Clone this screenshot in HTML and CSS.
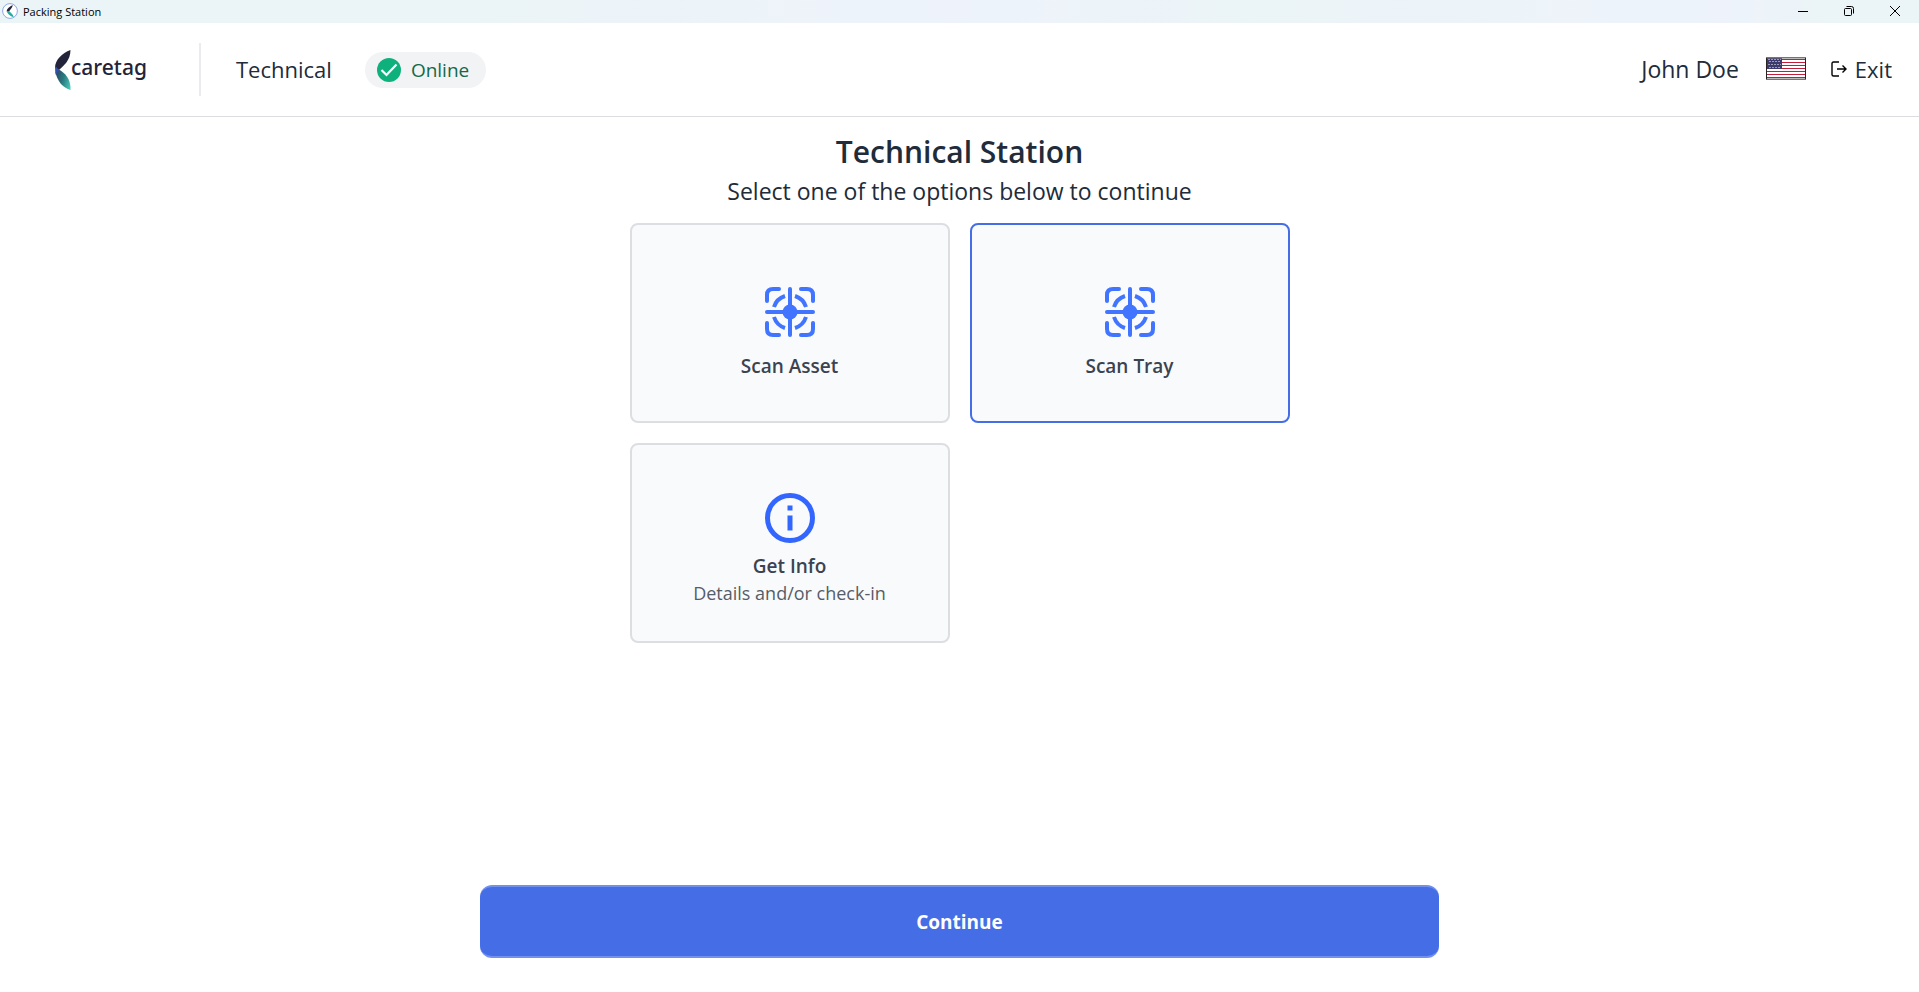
FILE: index.html
```html
<!DOCTYPE html>
<html lang="en">
<head>
<meta charset="UTF-8">
<meta name="viewport" content="width=device-width, initial-scale=1.0">
<title>Packing Station</title>
<link rel="stylesheet" href="styles.css">
</head>
<body>

<div class="titlebar">
  <svg class="app-icon" viewBox="0 0 16 16" aria-hidden="true">
    <circle cx="8" cy="8" r="7.4" fill="#fff" stroke="#8fa6e8"/>
    <path d="M10.8 2C7.5 3.5 5 5.5 4.600 8.2L7 8.8C7.8 6.8 10.5 5 10.8 2Z" fill="#23233a"/>
    <path d="M4.600 8C5.4 11 8 13 11.6 14.2C11.6 11.5 9 10.2 7 8Z" fill="#1fae9f"/>
  </svg>
  <span class="titlebar-text">Packing Station</span>
  <div class="window-controls">
    <button type="button" aria-label="Minimize">
      <svg viewBox="0 0 12 12"><path d="M1 6.5H11"/></svg>
    </button>
    <button type="button" aria-label="Restore">
      <svg viewBox="0 0 12 12"><rect x="1.5" y="3.5" width="7" height="7" rx="1"/><path d="M3.5 1.5H8.5A2 2 0 0 1 10.5 3.5V8.5"/></svg>
    </button>
    <button type="button" aria-label="Close">
      <svg viewBox="0 0 12 12"><path d="M1 1L11 11M11 1L1 11"/></svg>
    </button>
  </div>
</div>

<header class="header">
  <div class="logo">
    <svg class="logo-mark" viewBox="0 0 16 40" aria-hidden="true">
      <defs>
        <linearGradient id="leaf" x1="0" y1="0.3" x2="1" y2="0.7">
          <stop offset="0" stop-color="#2a4a66"/>
          <stop offset="0.5" stop-color="#2b7a80"/>
          <stop offset="1" stop-color="#45c4b4"/>
        </linearGradient>
      </defs>
      <path d="M15.5 0C7 3 0 10 0 18L4 20C8 16 15.500 11 15.500 0Z" fill="#23233a"/>
      <path d="M0.500 22C2 31 8 38 15.500 40C16 29 10 23 4 19.500Z" fill="url(#leaf)"/>
      <path d="M0.300 16C0 19 0 22 0.800 25L4 19.800Z" fill="#3350b0"/>
    </svg>
    <span class="logo-text">caretag</span>
  </div>
  <div class="station">Technical</div>
  <div class="status">
    <svg class="status-icon" viewBox="0 0 24 24" aria-hidden="true">
      <circle cx="12" cy="12" r="12" fill="#0eb17c"/>
      <path d="M4.500 12L9.500 17L19.500 6.500" fill="none" stroke="#fff" stroke-width="2.200"/>
    </svg>
    <span>Online</span>
  </div>
  <div class="user">
    <span>John Doe</span>
    <button type="button" class="flag" aria-label="Language: English (US)">
      <svg viewBox="0 0 40 23">
        <rect width="40" height="23" fill="#fff"/>
        <path d="M0 2.500H40M0 5.500H40M0 8.500H40M0 11.500H40M0 14.500H40M0 17.500H40M0 20.500H40" stroke="#bf1f3a" stroke-width="1.200"/>
        <rect x="1" y="1" width="15" height="11" fill="#3c3b6e"/>
        <path d="M2.500 2.500H15M3.500 4.500H15M2.500 7.500H15M3.500 10.500H15" stroke="#fff" stroke-dasharray="1 2"/>
        <path d="M0 0.700H40M0 22.300H40" stroke="#7d7276" stroke-width="1.400"/>
        <path d="M0.500 1V22M39.500 1V22" stroke="#2b2226"/>
      </svg>
    </button>
    <a href="#" class="exit">
      <svg viewBox="0 0 16 16" aria-hidden="true"><path d="M8 1H2.500Q1 1 1 2.500V13.500Q1 15 2.500 15H8M6 8H15M11.500 4.500L15 8L11.500 11.500"/></svg>
      <span>Exit</span>
    </a>
  </div>
</header>

<main class="content">
  <h1>Technical Station</h1>
  <p class="subtitle">Select one of the options below to continue</p>
  <div class="options">
    <button type="button" class="option option-scan">
      <svg class="option-icon" viewBox="0 0 50 50" aria-hidden="true">
        <g id="scan" fill="none" stroke="#4174ff" stroke-width="4" stroke-linecap="round">
          <path d="M14 2H8Q2 2 2 8V14M36 2H42Q48 2 48 8V14M2 36V42Q2 48 8 48H14M48 36V42Q48 48 42 48H36"/>
          <path d="M25 2V48M2 25H48"/>
          <path d="M20 9A17 17 0 0 0 9 20M30 9A17 17 0 0 1 41 20M9 30A17 17 0 0 0 20 41M41 30A17 17 0 0 1 30 41" stroke-linecap="butt"/>
          <circle cx="25" cy="25" r="7.500" fill="#4174ff" stroke="none"/>
        </g>
      </svg>
      <span class="option-title">Scan Asset</span>
    </button>
    <button type="button" class="option option-scan selected">
      <svg class="option-icon" viewBox="0 0 50 50" aria-hidden="true"><use href="#scan"/></svg>
      <span class="option-title">Scan Tray</span>
    </button>
    <button type="button" class="option">
      <svg class="option-icon" viewBox="0 0 50 50" aria-hidden="true">
        <circle cx="25" cy="25" r="22.500" fill="none" stroke="#3366ff" stroke-width="5"/>
        <path d="M22.500 12.500H27.500V17.500H22.500ZM22.500 22.500H27.500V37.500H22.500Z" fill="#3366ff"/>
      </svg>
      <span class="option-title">Get Info</span>
      <span class="option-text">Details and/or check-in</span>
    </button>
  </div>
</main>

<footer class="footer">
  <button type="button" class="continue">Continue</button>
</footer>

</body>
</html>
```
FILE: styles.css
```css
* {
  box-sizing: border-box;
}
body {
  margin: 0;
  min-height: 100vh;
  display: flex;
  flex-direction: column;
  font-family: "Segoe UI", "Open Sans", "Noto Sans", sans-serif;
  color: #212b3a;
  background-color: #fff;
}
button {
  font-family: inherit;
  color: inherit;
  background: none;
  border: none;
  padding: 0;
  cursor: pointer;
}
svg {
  display: block;
}
.titlebar {
  display: flex;
  align-items: center;
  height: 23px;
  padding: 0 1px 1px 2px;
  background: linear-gradient(90deg, #ebf4f7 0%, #ebf4f7 25%, #eef3fb 50%, #ebf4f7 65%, #eef3fb 90%, #ebf4f7 95%);
}
.app-icon {
  width: 16px;
  height: 16px;
}
.titlebar-text {
  margin-left: 5px;
  font-size: 11px;
  color: #000;
}
.window-controls {
  display: flex;
  margin-left: auto;
}
.window-controls button {
  width: 46px;
  height: 22px;
  display: flex;
  justify-content: center;
  align-items: center;
}
.window-controls svg {
  width: 12px;
  height: 12px;
  fill: none;
  stroke: #000;
}
.header {
  display: flex;
  align-items: center;
  height: 94px;
  padding: 0 27px 0 55px;
  border-bottom: 1px solid #dcdde1;
  font-size: 22px;
}
.logo {
  display: flex;
  align-items: center;
  width: 146px;
  height: 53px;
  border-right: 2px solid #ebebed;
}
.logo-mark {
  width: 16px;
  height: 40px;
}
.logo-text {
  padding-bottom: 5px;
  font-family: "Noto Sans", sans-serif;
  font-size: 21px;
  font-weight: 500;
  line-height: 24px;
  color: #23233a;
}
.station {
  margin-left: 35px;
  padding-bottom: 2px;
}
.status {
  display: flex;
  align-items: center;
  gap: 10px;
  height: 36px;
  margin-left: 33px;
  padding: 0 17px 0 12px;
  border-radius: 18px;
  background-color: #f2f3f5;
  color: #11694b;
  font-size: 19px;
}
.status-icon {
  width: 24px;
  height: 24px;
}
.user {
  display: flex;
  align-items: center;
  margin-left: auto;
  padding-bottom: 2px;
  font-size: 23px;
}
.flag {
  margin: 0 25px 0 27px;
}
.flag svg {
  width: 40px;
  height: 23px;
}
.exit {
  display: flex;
  align-items: center;
  gap: 8px;
  color: inherit;
  font-size: 22px;
  text-decoration: none;
}
.exit svg {
  width: 16px;
  height: 16px;
  fill: none;
  stroke: #000;
  stroke-width: 1.4;
}
.content {
  flex: 1;
  display: flex;
  flex-direction: column;
  align-items: center;
  padding-top: 12px;
}
h1 {
  margin: 0;
  font-size: 30px;
  font-weight: 600;
  line-height: 46px;
}
.subtitle {
  margin: 0;
  font-size: 23px;
  line-height: 32px;
}
.options {
  display: grid;
  grid-template-columns: repeat(2, 320px);
  gap: 20px;
  margin-top: 16px;
}
.option {
  display: flex;
  flex-direction: column;
  align-items: center;
  justify-content: center;
  height: 200px;
  padding-top: 12px;
  border: 2px solid #dcdee2;
  border-radius: 8px;
  background-color: #f9fafc;
  color: #3b4350;
}
.option.selected {
  border-color: #456ee6;
}
.option-icon {
  width: 50px;
  height: 50px;
  margin-bottom: 9px;
}
.option-title {
  font-size: 19px;
  font-weight: 600;
  line-height: 28px;
}
.option-scan {
  padding-top: 20px;
}
.option-scan .option-icon {
  margin-bottom: 15px;
}
.option-text {
  font-size: 18px;
  line-height: 26px;
  color: #555d68;
}
.footer {
  display: flex;
  justify-content: center;
  padding-bottom: 34px;
}
.continue {
  width: 50%;
  height: 73px;
  border: 2px solid #7291ec;
  border-width: 2px 0;
  border-radius: 12px;
  background-color: #456ee6;
  color: #fff;
  font-size: 19px;
  font-weight: 700;
}
```
